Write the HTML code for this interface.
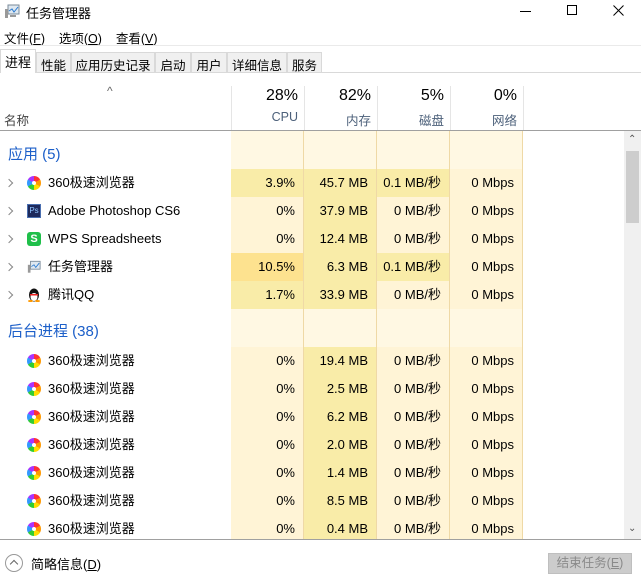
<!DOCTYPE html>
<html><head><meta charset="utf-8"><style>
*{margin:0;padding:0;box-sizing:border-box}
body{width:641px;height:586px;overflow:hidden;background:#fff;font-family:"Liberation Sans","Noto Sans CJK SC",sans-serif;font-size:13px;color:#000;position:relative}
.a{position:absolute}
.tab{position:absolute;top:52px;height:21px;border:1px solid #d9d9d9;background:#f0f0f0;font-size:12.5px;padding-top:2px;text-align:center}
.row{position:absolute;left:0;width:624px;height:28px}
.c{position:absolute;top:0;height:28px;line-height:28px;text-align:right;padding-right:8px;border-right:1px solid #efd9a6}
.c1{left:231px;width:73px}.c2{left:304px;width:73px}.c3{left:377px;width:73px}.c4{left:450px;width:73px}
.L{background:#fff4d6}.M{background:#f9eca8}.H{background:#fde28f}.G{background:#fff8e3}
.nm{position:absolute;left:48px;top:0;line-height:28px}
.arr{position:absolute;left:6px;top:11px;width:6px;height:6px;border-right:1.3px solid #888;border-top:1.3px solid #888;transform:rotate(45deg)}
.ic{position:absolute;left:27px;top:7px;width:14px;height:14px}
.r360{border-radius:50%;background:conic-gradient(#f33 0 60deg,#f90 60deg 120deg,#fd0 120deg 180deg,#3c3 180deg 240deg,#39f 240deg 300deg,#a3f 300deg)}
.r360::after{content:"";position:absolute;left:5px;top:5px;width:4px;height:4px;border-radius:50%;background:#fff}
.grp{position:absolute;left:8px;color:#1c5fc9;font-size:15px}
</style></head><body>
<svg class="a" style="left:4px;top:4px" width="16" height="15" viewBox="0 0 16 15"><rect x="4" y="1" width="11" height="9" fill="#dfe8f0" stroke="#7a8a99"/><polyline points="5,7 8,5 10,8 14,3" fill="none" stroke="#2a7ad0"/><rect x="1" y="5" width="3" height="9" fill="#999"/><rect x="6" y="11" width="6" height="2" fill="#999"/></svg>
<div class="a" style="left:26px;top:3px;font-size:13px">任务管理器</div>
<div class="a" style="left:520px;top:11px;width:11px;height:1px;background:#000"></div>
<div class="a" style="left:567px;top:5px;width:10px;height:10px;border:1px solid #000"></div>
<svg class="a" style="left:613px;top:5px" width="11" height="11"><path d="M0.5 0.5L10.5 10.5M10.5 0.5L0.5 10.5" stroke="#000" stroke-width="1"/></svg>
<div class="a" style="left:4px;top:28px;font-size:12.5px">文件(<u>F</u>)&nbsp;&nbsp;&nbsp;&nbsp;选项(<u>O</u>)&nbsp;&nbsp;&nbsp;&nbsp;查看(<u>V</u>)</div>
<div class="a" style="left:0;top:45px;width:641px;height:1px;background:#eaeaea"></div>
<div class="a" style="left:0;top:72px;width:641px;height:1px;background:#d9d9d9"></div>
<div class="tab" style="left:0;top:49px;height:24px;width:36px;background:#fff;border-bottom:none;font-size:13px">进程</div>
<div class="tab" style="left:36px;width:35px">性能</div>
<div class="tab" style="left:71px;width:84px">应用历史记录</div>
<div class="tab" style="left:155px;width:36px">启动</div>
<div class="tab" style="left:191px;width:36px">用户</div>
<div class="tab" style="left:227px;width:60px">详细信息</div>
<div class="tab" style="left:287px;width:35px">服务</div>
<div class="a" style="left:107px;top:84px;font-size:12px;color:#666">^</div>
<div class="a" style="left:4px;top:110px;font-size:12.5px;color:#444">名称</div>
<div class="a" style="left:231px;top:86px;height:44px;width:1px;background:#e5e5e5"></div>
<div class="a" style="left:304px;top:86px;height:44px;width:1px;background:#e5e5e5"></div>
<div class="a" style="left:377px;top:86px;height:44px;width:1px;background:#e5e5e5"></div>
<div class="a" style="left:450px;top:86px;height:44px;width:1px;background:#e5e5e5"></div>
<div class="a" style="left:523px;top:86px;height:44px;width:1px;background:#e5e5e5"></div>
<div class="a" style="left:231px;top:87px;width:67px;text-align:right;font-size:16px">28%</div>
<div class="a" style="left:304px;top:87px;width:67px;text-align:right;font-size:16px">82%</div>
<div class="a" style="left:377px;top:87px;width:67px;text-align:right;font-size:16px">5%</div>
<div class="a" style="left:450px;top:87px;width:67px;text-align:right;font-size:16px">0%</div>
<div class="a" style="left:231px;top:110px;width:67px;text-align:right;font-size:12.5px;color:#4c607a">CPU</div>
<div class="a" style="left:304px;top:110px;width:67px;text-align:right;font-size:12.5px;color:#4c607a">内存</div>
<div class="a" style="left:377px;top:110px;width:67px;text-align:right;font-size:12.5px;color:#4c607a">磁盘</div>
<div class="a" style="left:450px;top:110px;width:67px;text-align:right;font-size:12.5px;color:#4c607a">网络</div>
<div class="a" style="left:0;top:130px;width:641px;height:1px;background:#a0a0a0"></div>
<div class="a" style="left:0;top:131px;width:641px;height:408px;overflow:hidden">
<div class="row" style="top:0;height:38px"><div class="c c1 G" style="height:38px"></div><div class="c c2 G" style="height:38px"></div><div class="c c3 G" style="height:38px"></div><div class="c c4 G" style="height:38px"></div><div class="grp" style="top:12px">应用 (5)</div></div>
<div class="row" style="top:38px"><div class="c c1 M">3.9%</div><div class="c c2 M">45.7 MB</div><div class="c c3 M">0.1 MB/秒</div><div class="c c4 L">0 Mbps</div><div class="arr"></div><div class="ic r360"></div><div class="nm">360极速浏览器</div></div>
<div class="row" style="top:66px"><div class="c c1 L">0%</div><div class="c c2 M">37.9 MB</div><div class="c c3 L">0 MB/秒</div><div class="c c4 L">0 Mbps</div><div class="arr"></div><div class="ic" style="background:#1d2a5c;border:1px solid #4a6fb0;color:#8fc4ff;font-size:8px;line-height:12px;text-align:center">Ps</div><div class="nm">Adobe Photoshop CS6</div></div>
<div class="row" style="top:94px"><div class="c c1 L">0%</div><div class="c c2 M">12.4 MB</div><div class="c c3 L">0 MB/秒</div><div class="c c4 L">0 Mbps</div><div class="arr"></div><div class="ic" style="background:#1fbf4a;border-radius:3px;color:#fff;font-size:11px;line-height:14px;text-align:center;font-weight:bold">S</div><div class="nm">WPS Spreadsheets</div></div>
<div class="row" style="top:122px"><div class="c c1 H">10.5%</div><div class="c c2 M">6.3 MB</div><div class="c c3 M">0.1 MB/秒</div><div class="c c4 L">0 Mbps</div><div class="arr"></div><svg class="ic" viewBox="0 0 16 15"><rect x="4" y="1" width="11" height="9" fill="#dfe8f0" stroke="#7a8a99"/><polyline points="5,7 8,5 10,8 14,3" fill="none" stroke="#2a7ad0"/><rect x="1" y="5" width="3" height="9" fill="#999"/></svg><div class="nm">任务管理器</div></div>
<div class="row" style="top:150px"><div class="c c1 M">1.7%</div><div class="c c2 M">33.9 MB</div><div class="c c3 L">0 MB/秒</div><div class="c c4 L">0 Mbps</div><div class="arr"></div><svg class="ic" viewBox="0 0 14 14"><ellipse cx="7" cy="7" rx="5" ry="6.5" fill="#111"/><ellipse cx="7" cy="9" rx="3.5" ry="4" fill="#fff"/><rect x="3" y="6" width="8" height="1.5" fill="#e22"/><ellipse cx="3.5" cy="13" rx="2.5" ry="1" fill="#f90"/><ellipse cx="10.5" cy="13" rx="2.5" ry="1" fill="#f90"/></svg><div class="nm">腾讯QQ</div></div>
<div class="row" style="top:178px;height:38px"><div class="c c1 G" style="height:38px"></div><div class="c c2 G" style="height:38px"></div><div class="c c3 G" style="height:38px"></div><div class="c c4 G" style="height:38px"></div><div class="grp" style="top:11px">后台进程 (38)</div></div>
<div class="row" style="top:216px"><div class="c c1 L">0%</div><div class="c c2 M">19.4 MB</div><div class="c c3 L">0 MB/秒</div><div class="c c4 L">0 Mbps</div><div class="ic r360"></div><div class="nm">360极速浏览器</div></div>
<div class="row" style="top:244px"><div class="c c1 L">0%</div><div class="c c2 M">2.5 MB</div><div class="c c3 L">0 MB/秒</div><div class="c c4 L">0 Mbps</div><div class="ic r360"></div><div class="nm">360极速浏览器</div></div>
<div class="row" style="top:272px"><div class="c c1 L">0%</div><div class="c c2 M">6.2 MB</div><div class="c c3 L">0 MB/秒</div><div class="c c4 L">0 Mbps</div><div class="ic r360"></div><div class="nm">360极速浏览器</div></div>
<div class="row" style="top:300px"><div class="c c1 L">0%</div><div class="c c2 M">2.0 MB</div><div class="c c3 L">0 MB/秒</div><div class="c c4 L">0 Mbps</div><div class="ic r360"></div><div class="nm">360极速浏览器</div></div>
<div class="row" style="top:328px"><div class="c c1 L">0%</div><div class="c c2 M">1.4 MB</div><div class="c c3 L">0 MB/秒</div><div class="c c4 L">0 Mbps</div><div class="ic r360"></div><div class="nm">360极速浏览器</div></div>
<div class="row" style="top:356px"><div class="c c1 L">0%</div><div class="c c2 M">8.5 MB</div><div class="c c3 L">0 MB/秒</div><div class="c c4 L">0 Mbps</div><div class="ic r360"></div><div class="nm">360极速浏览器</div></div>
<div class="row" style="top:384px"><div class="c c1 L">0%</div><div class="c c2 M">0.4 MB</div><div class="c c3 L">0 MB/秒</div><div class="c c4 L">0 Mbps</div><div class="ic r360"></div><div class="nm">360极速浏览器</div></div>
<div class="a" style="left:624px;top:0;width:17px;height:408px;background:#f0f0f0"></div>
<div class="a" style="left:628px;top:3px;font-size:10px;color:#555">⌃</div>
<div class="a" style="left:626px;top:20px;width:13px;height:72px;background:#cdcdcd"></div>
<div class="a" style="left:628px;top:392px;font-size:10px;color:#555">⌄</div>
</div>
<div class="a" style="left:0;top:539px;width:641px;height:1px;background:#a0a0a0"></div>
<div class="a" style="left:5px;top:554px;width:18px;height:18px;border:1px solid #999;border-radius:50%"></div>
<div class="a" style="left:11px;top:561px;width:6px;height:6px;border-left:1px solid #666;border-top:1px solid #666;transform:rotate(45deg)"></div>
<div class="a" style="left:31px;top:554px;font-size:13px">简略信息(<u>D</u>)</div>
<div class="a" style="left:548px;top:553px;width:84px;height:21px;background:#cccccc;border:1px solid #bfbfbf;color:#8a8a8a;text-align:center;line-height:19px;font-size:12.5px">结束任务(<u>E</u>)</div>
</body></html>
